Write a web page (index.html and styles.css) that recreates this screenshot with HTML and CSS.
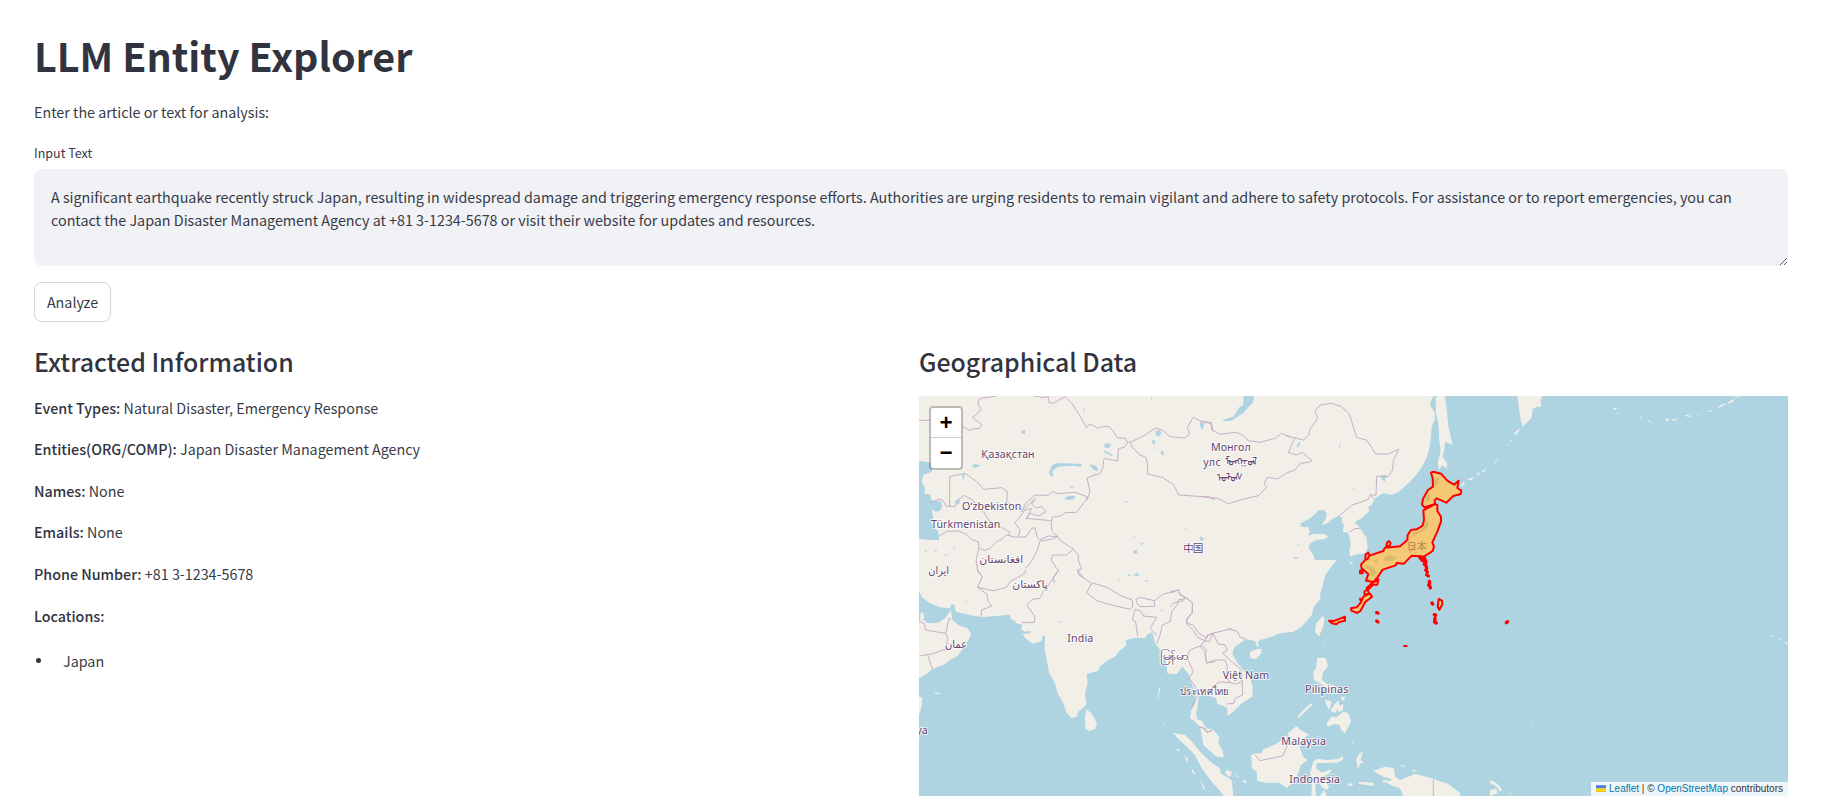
FILE: index.html
```html
<!DOCTYPE html>
<html lang="en">
<head>
<meta charset="utf-8">
<title>LLM Entity Explorer</title>
<link rel="stylesheet" href="styles.css">
</head>
<body>
<main class="page">
  <h1 class="title">LLM Entity Explorer</h1>
  <p class="intro">Enter the article or text for analysis:</p>
  <label class="field-label" for="input">Input Text</label>
  <textarea class="field" id="input" spellcheck="false">A significant earthquake recently struck Japan, resulting in widespread damage and triggering emergency response efforts. Authorities are urging residents to remain vigilant and adhere to safety protocols. For assistance or to report emergencies, you can contact the Japan Disaster Management Agency at +81 3-1234-5678 or visit their website for updates and resources.</textarea>
  <button class="analyze" type="button">Analyze</button>
  <div class="columns">
    <section>
      <h2 class="heading">Extracted Information</h2>
      <div class="facts">
        <p><strong>Event Types:</strong> Natural Disaster, Emergency Response</p>
        <p><strong>Entities(ORG/COMP):</strong> Japan Disaster Management Agency</p>
        <p><strong>Names:</strong> None</p>
        <p><strong>Emails:</strong> None</p>
        <p><strong>Phone Number:</strong> +81 3-1234-5678</p>
        <p><strong>Locations:</strong></p>
      </div>
      <ul class="places"><li>Japan</li></ul>
    </section>
    <section>
      <h2 class="heading">Geographical Data</h2>
      <div class="map">
        <svg class="tiles" viewBox="0 0 2607 1200">
          <!-- Central Asia -->
          <g transform="translate(-12,-168)">
            <path class="land" d="M12 168H950V740H12Z"/>
            <path class="water" d="M12 364L25 364 52 370 50 395 25 405 20 425 30 445 28 460 47 465 48 480 60 482 78 485 82 500 75 512 62 515 50 508 55 535 48 545 52 555 70 575 72 600 40 600 12 596Z"/>
            <path class="water" d="M402 395L412 375 430 369 500 372 498 380 470 377 430 380 412 392 415 412 405 406ZM523 372L545 378 550 393 535 390ZM448 474L462 467 482 468 478 477 455 480ZM570 310L590 312 580 325 568 322ZM565 330L594 344 590 348 566 336ZM722 272L735 270 740 280 730 290 722 284ZM710 298L720 303 718 314 712 308ZM860 243L868 245 866 270 860 272ZM322 270L331 270 329 283 320 281ZM175 372L198 376 180 384 172 380ZM142 402L150 405 143 427ZM124 480L133 477 135 488 125 495ZM850 590L864 592 866 602 852 600ZM627 483L640 485 634 489ZM655 590L660 588 660 594ZM735 335L746 332 746 346 740 345ZM672 612L690 605 680 614ZM655 632L665 628 668 640 656 642ZM465 437L480 440 468 444ZM505 202L511 213 504 210ZM620 705L635 702 632 712ZM650 700L672 696 665 706ZM535 398L540 400 536 406ZM28 632L38 630 32 636ZM58 632L68 628 62 635ZM85 645L100 643 92 648ZM115 622L120 618 118 626ZM810 564L816 568 810 569ZM718 322L723 325 718 328ZM540 174L545 172 542 178ZM708 168L712 178 708 180Z"/>
          </g>
          <!-- East Asia -->
          <g transform="translate(843,-18)">
            <path class="land" d="M-10 18H700L690 40 695 55 704 65 704 90 695 110 692 150 688 175 680 205 660 240 640 265 600 303 575 315 552 310 545 312 525 325 515 345 505 350 508 363 485 385 470 392 465 400 480 412 490 430 500 445 503 475 495 490 470 493 450 500 448 480 452 465 450 450 445 428 428 425 432 405 425 395 428 383 415 378 395 388 385 398 365 405 378 385 380 370 372 360 355 361 342 376 325 388 302 400 303 411 325 411 330 425 322 437 345 431 370 432 385 439 375 447 350 450 332 458 325 472 340 495 350 525 377 552 365 590 360 612 340 645 310 670 280 705 265 720H-10Z"/>
            <path class="land" d="M707 22L715 18H735L740 60 745 110 758 165 735 155 733 175 728 200 742 222 740 236 727 226 717 240 713 215 722 185 718 150 715 100 708 70ZM447 517L460 516 455 523ZM782 285L792 276 795 280 786 290ZM800 270L822 260 815 270ZM828 252L842 246 835 256ZM844 243L860 235 850 246ZM870 225L874 222 874 226ZM888 213L898 205 893 213Z"/>
            <path class="water" d="M130 18H163L158 38 130 68 95 92 66 94 75 88 100 80 118 52 130 45ZM290 165L300 155 302 160 292 175ZM415 172L422 160 420 174ZM543 256L558 256 555 275 545 268ZM0 98H13L8 122 0 108ZM310 515L320 520 315 525ZM280 500L300 503 285 507ZM248 600L262 602 255 612ZM192 570L208 568 200 580ZM270 600L285 598 278 604ZM302 568L320 562 318 574ZM0 440L12 445 8 453 0 450ZM260 134L272 137 262 141ZM292 462L298 460 297 467ZM325 530L333 535 326 538ZM458 295L462 292 461 300Z"/>
          </g>
          <!-- Middle East and South Asia -->
          <g transform="translate(-12,522)">
            <path class="land" d="M12 62L20 80 45 100 75 112 105 115 110 102 118 104 122 125 165 135 200 142 240 138 285 134 288 148 300 152 305 160 322 164 318 178 330 185 348 182 345 190 322 192 335 208 355 222 380 212 384 197 390 197 389 240 397 280 402 308 420 340 428 370 445 400 455 430 470 445 485 440 490 425 505 413 514 403 510 370 518 340 515 312 550 302 553 290 580 270 600 260 612 244 635 225 632 210 660 203 690 205 697 193 712 187 720 220 735 240 748 260 755 285 757 310 785 312 802 288 818 310 930 340V-30H12ZM12 155L22 150 30 152 38 160 70 158 90 145 108 120 112 150 130 165 158 175 168 192 160 212 148 222 142 238 128 258 105 270 85 285 52 297 38 310 12 324ZM18 125L26 130 27 148 14 152ZM514 418L530 430 546 460 540 478 520 483 511 475 510 440ZM60 367L76 369 72 373 60 371ZM12 380L22 383 20 410 12 435ZM732 352L736 353 728 400ZM782 535L795 540 790 545ZM808 555L820 568 815 577ZM832 598L840 612 838 615ZM92 663L97 664 95 667ZM746 458L752 468 748 467Z"/>
            <path class="water" d="M657 12L668 8 672 18 660 18ZM636 12L650 15 640 18ZM688 30L703 32 695 36ZM430 158L440 152 438 158ZM148 93L158 95 150 97ZM608 30L620 32 612 34ZM760 105L775 98 765 107ZM735 120L745 118 738 123Z"/>
          </g>
          <!-- South-East Asia -->
          <g transform="translate(753,552)">
            <path class="land" d="M-10 -60H500L465 -15 455 30 450 40 452 55 432 80 425 105 395 140 370 155 330 160 300 172 270 180 262 188 268 198 262 202 255 183 228 178 210 190 193 202 187 222 200 245 218 268 238 288 248 320 247 350 235 358 215 370 190 395 172 408 172 385 160 378 142 372 138 355 110 345 92 342 86 352 82 385 78 400 82 418 95 422 110 445 130 450 148 470 145 490 157 510 162 532 140 530 120 513 100 495 95 465 90 440 75 425 60 415 64 390 76 370 75 340 65 310 55 280 42 256 20 280 0 282Z"/>
            <path class="land" d="M240 215L262 206 276 208 272 222 258 237 240 234ZM457 108L463 115 460 138 447 170 435 155 438 132ZM442 233L467 233 474 258 458 280 456 300 470 312 490 315 505 330 470 325 450 310 432 300 430 275 438 265ZM10 459L45 465 70 490 90 515 125 548 150 565 152 580 185 600 190 648H160L150 632 125 605 95 565 75 525 45 495 28 480ZM382 410L400 390 424 369 427 374 405 396 386 414ZM243 525L258 520 275 520 280 508 318 492 335 480 352 462 380 437 388 448 418 464 395 478 400 485 388 500 400 530 412 540 392 556 385 580 372 605 350 624 328 608 285 608 262 602 260 575 246 565ZM430 545L440 536 470 540 505 537 520 527 518 540 500 548 440 549 438 565 455 578 485 568 480 580 455 592 478 620 470 630 455 622 445 600 436 610 438 648H424L426 600 420 580ZM470 428L485 410 500 412 520 395 535 400 543 425 538 435 525 460 515 452 508 435 495 432 472 440ZM465 358L485 365 478 390 468 372ZM490 378L505 360 508 378 495 400 482 392ZM512 350L525 350 522 362 515 360ZM503 380L520 372 518 392 505 395ZM610 572L645 560 672 565 675 590 690 600 735 582 775 592 835 612 870 638V648H700L690 625 670 618 648 608 668 598 640 590 625 582ZM568 520L578 516 572 540 582 550 570 550 565 570 558 540ZM565 605L610 608 612 618 568 612ZM535 610L550 612 545 618 533 614ZM637 602L650 600 655 605 640 608ZM220 600L230 602 226 609 218 606ZM198 583L206 590 200 592ZM170 570L186 575 180 592 165 580ZM65 565L75 578 68 580ZM90 600L105 625 100 628ZM690 555L708 558 700 562ZM725 568L740 572 730 575ZM545 482L551 486 548 490ZM450 648L462 630 470 648Z"/>
            <path class="land faint" d="M865 295L872 290 870 296ZM850 325L856 320 855 327ZM678 428L681 424 681 430ZM738 391L742 390 741 394ZM885 590L898 590 890 593ZM455 215L463 217 458 219ZM460 188L465 196 461 200ZM228 485L233 488 229 492ZM418 500L425 503 419 506Z"/>
          </g>
          <!-- Pacific -->
          <g transform="translate(1713,-18)">
            <path class="land" d="M82 18H157L152 30 154 50 140 50 128 58 124 85 98 110 92 90ZM72 132L80 122 92 115 85 127 76 135ZM60 148L66 150 60 156ZM52 162L58 165 52 167ZM12 218L22 209 18 218ZM33 192L38 188 36 193ZM366 54L380 54 378 60ZM380 68L390 70 384 72ZM448 84L455 80 452 86ZM470 84L486 100 480 98ZM526 88L535 85 538 92 528 92ZM543 90L565 84 552 92ZM582 78L598 72 595 78 610 77 600 80ZM620 73L628 73 622 76ZM650 65L672 58 660 66ZM684 50L700 42 712 40 698 48 686 54ZM712 38L735 25 728 36 716 41ZM732 20L752 20 738 23ZM840 738L848 735 849 741ZM868 747L875 748 872 753ZM884 755L893 757 890 764ZM120 1006L127 1004 126 1008ZM203 1033L207 1033 205 1035ZM878 1090L884 1097 880 1096ZM0 1170L20 1180 36 1198 30 1206 22 1192 0 1178ZM0 1200L20 1195 22 1210 0 1218ZM60 1212L64 1210 62 1218Z"/>
          </g>
          <!-- Borders -->
          <g class="borders">
            <g transform="translate(-12,-168)">
              <path d="M12 241H46M142 260L165 271 180 266 195 265 200 254 172 232 183 225 199 207 190 195 190 180 202 174 245 168M360 170L372 168 380 173 400 170 402 188 415 190 450 170 470 190 492 223 515 263 523 252 550 264 565 260 583 260 595 275 608 294 630 294 638 308 628 322 610 326 608 363 567 355 563 385 556 400 516 414 525 455 517 477 505 490 485 517 450 518 440 527 412 532 408 550 412 575 428 590M638 306H648L690 285 722 264 745 272 765 290 808 294 824 283 817 263 835 232 860 245 887 250 893 275M646 308L652 322 675 345 693 352 698 375 697 402 742 412 775 433 791 465 850 469 882 471 900 479M104 498V410L150 400 185 425 208 448 260 443 277 455 275 485 300 500 320 515 332 490 360 465 400 466 412 455 430 461 480 457 517 470 513 480M45 490L70 478 82 480 94 499H122L122 485 148 466 172 480 190 500 205 515 225 545 255 560 283 575V587L300 592 310 590 315 570 300 548 312 535 328 512 350 505 335 535 407 542M320 515L340 495 362 475 350 492 362 503 380 500 393 515 370 528 345 520 333 538M70 590L95 574 130 573 155 583 172 600 190 605 192 625 210 631 225 625 245 605 258 600 272 585 283 587M192 625L183 660 188 690 202 712M310 592L333 590 350 565 360 563 367 592 374 599 400 588 428 590 440 605 475 627 490 645 490 660 500 687 488 690 507 717M428 590L410 598 375 603 367 630 352 660 337 680 330 685M475 627L455 645 412 645 408 660 430 692 415 710 418 730"/>
            </g>
            <g transform="translate(843,-18)">
              <path d="M0 93L35 98 38 120 60 133 105 127 125 133 145 152 180 157 225 145 245 130 265 140 284 143 310 150 328 133 330 118 353 85 345 62 360 45 395 40 425 50 448 72 470 143 500 150 527 192 565 192 597 177 580 212 578 240 565 260 530 258 528 315 510 315 505 328 478 338 456 345 415 380M285 143L265 188 290 195 307 187 336 212 325 217 300 220 285 240 262 248 232 267 202 262 192 280 200 292 175 317 120 330 85 342 55 325 0 319M448 427L465 416 483 414M80 720L90 715 98 720M510 315L520 325 523 328"/>
            </g>
            <g transform="translate(-12,522)">
              <path d="M185 0L202 20 188 52 215 72 220 95 230 108 200 120 198 142M188 52L235 62 275 52 285 35 330 10 332 0M432 0L400 45 385 65 375 85 352 88 335 105 360 140 358 157 320 158M488 0L492 15 530 40 515 68 545 92 590 105 645 118 653 110 652 90 620 78 575 52 538 40 530 42M663 88L675 82 718 92 719 109 675 110 665 98ZM718 92L745 72 780 65 790 58 795 75 812 82 832 98 831 130 815 145 816 160 835 165 850 188 875 205 880 195 900 188M812 85L790 90 788 102 770 125 765 155 742 165 735 195 725 222M660 118L652 150 662 155 668 198M660 118L680 125 685 138 725 142 705 175 725 195M12 155L28 160 32 180 60 185 92 190 102 145 108 148M92 190L98 205 92 238 50 252 12 258M38 255L52 297M873 210L855 228 825 240 815 260 835 305 822 325 838 345 850 372 830 415M860 225L875 240 870 255 875 278 900 275M855 470L865 475 875 487 890 482"/>
            </g>
            <g transform="translate(753,552)">
              <path d="M0 35L25 30 30 42 45 52 68 68 67 98 50 120 50 132 70 150 82 172 105 182 112 165 128 160 180 147 203 155 210 172 228 178M0 80L10 70 40 62 45 52M105 182L90 198 105 215 110 250 135 240 165 240 172 260 170 290 180 308 150 305 130 318 145 340M128 160L145 192 165 195 172 210 158 220 180 240 215 270 218 345 195 355 192 370 168 372M180 308L200 312 218 302M105 182L117 186 128 162M255 525L270 542 338 528 355 490 353 462M790 600V648M88 440L105 445 112 457 126 452"/>
            </g>
          </g>
          <!-- Country labels -->
          <g class="labels">
            <text x="187" y="186" textLength="160">Қазақстан</text>
            <text x="129" y="342" textLength="178">Oʻzbekiston</text>
            <text x="36" y="396" textLength="208">Türkmenistan</text>
            <text x="181" y="502" textLength="132" lengthAdjust="spacingAndGlyphs">افغانستان</text>
            <text x="28" y="534" textLength="62" lengthAdjust="spacingAndGlyphs">ایران</text>
            <text x="280" y="577" textLength="106" lengthAdjust="spacingAndGlyphs">پاکستان</text>
            <text x="78" y="756" textLength="66" lengthAdjust="spacingAndGlyphs">عمان</text>
            <text x="445" y="739" textLength="78">India</text>
            <text x="793" y="467" textLength="60">中国</text>
            <text x="876" y="164" textLength="119">Монгол</text>
            <text x="853" y="210" textLength="52">улс</text>
            <text x="917" y="208" textLength="98" lengthAdjust="spacingAndGlyphs">ᠮᠣᠩᠭᠣᠯ</text>
            <text x="895" y="255" textLength="78" lengthAdjust="spacingAndGlyphs">ᠤᠯᠤᠰ</text>
            <text x="723" y="792" textLength="84" lengthAdjust="spacingAndGlyphs">မြန်မာ</text>
            <text x="783" y="896" textLength="146" lengthAdjust="spacingAndGlyphs">ประเทศไทย</text>
            <text x="911" y="849" textLength="140">Việt Nam</text>
            <text x="1158" y="890" textLength="130">Pilipinas</text>
            <text x="1087" y="1047" textLength="134">Malaysia</text>
            <text x="1111" y="1162" textLength="152">Indonesia</text>
            <text x="-8" y="1013">ya</text>
          </g>
          <!-- Japan highlight -->
          <g class="japan" transform="translate(1173,132)">
            <path d="M363 98L370 95 393 101 412 122 432 134 446 122 442 144 454 152 452 162 430 168 409 188 380 175 374 181 375 192 350 200 344 203 336 194 339 176 354 150 369 140 368 115Z"/>
            <path d="M340 211L375 192 382 195 382 213 393 230 393 245 382 275 367 307 372 320 368 333 342 350 330 349 305 347 282 371 260 369 257 376 218 389 202 413 190 426 168 422 175 402 155 385 153 374 178 347 220 333 225 323 270 319 292 300 293 285 303 270 320 268 338 257 342 240Z"/>
            <path d="M229 318L231 308 237 303 242 310 238 318ZM166 358L167 343 175 338 179 346 172 358ZM150 392L158 390 158 400 150 400ZM184 431L205 418 202 434 190 434ZM170 444L184 431 188 436 175 448ZM163 455L172 448 178 462 164 463ZM123 505L140 502 152 488 160 470 180 461 186 470 165 487 152 512 142 519 124 512ZM150 476L156 480 152 482ZM57 542L72 543 90 536 105 530V542L88 546 78 553 66 550ZM386 477L396 482 397 493 388 509 383 500Z"/>
            <path class="terrain" d="M372 118L388 110 384 132 374 138ZM346 172L356 160 362 176 350 188ZM346 250L356 240 354 262 340 272 318 284 308 292 306 280 330 272ZM222 352L240 346 262 354 248 362 225 364ZM190 362L206 356 200 370ZM168 374L190 382 200 400 186 412 178 390 166 384ZM300 325L318 312 314 330 296 340Z"/>
            <path class="islet" d="M328 350L336 360 342 364M342 352L348 366 343 373M347 374L350 385M347 390L352 396M350 404L355 408M358 424L359 430 356 435M360 440L361 444M366 489L368 492M373 524L377 525M375 534L374 546 379 549M200 518L204 519M200 543L204 546M589 548L593 545"/>
            <path d="M282 618H290"/>
            <text x="290" y="329" textLength="60">日本</text>
          </g>
        </svg>
        <div class="zoom"><span>+</span><span>−</span></div>
        <div class="credit"><svg class="flag" viewBox="0 0 12 8"><path fill="#4C7BE1" d="M0 0h12v4H0z"/><path fill="#FFD500" d="M0 4h12v3H0z"/><path fill="#E0BC00" d="M0 7h12v1H0z"/></svg> <a>Leaflet</a> | © <a>OpenStreetMap</a> contributors</div>
      </div>
    </section>
  </div>
</main>
</body>
</html>
```

FILE: styles.css
```css
* { box-sizing: border-box; }
body {
  margin: 0;
  background: #fff;
  color: #383a46;
  font: 400 14.32px/25.6px "Noto Sans CJK JP", sans-serif;
}
p, h1, h2, ul { margin: 0; padding: 0; }
.page { display: flex; flex-direction: column; align-items: flex-start; padding: 28px 39px 0 34px; }
.title { color: #31333f; font-size: 39.45px; font-weight: 700; line-height: 53px; }
.intro { margin-top: 18px; }
.field-label { margin-top: 17px; font-size: 12.5px; line-height: 22px; }
.field {
  width: 100%;
  height: 97px;
  margin-top: 5px;
  padding: 16px 17px;
  border: 0;
  border-radius: 8px;
  background: #f0f2f6;
  color: #383a46;
  font: 400 14.32px/23px "Noto Sans CJK JP", sans-serif;
  resize: vertical;
  overflow: hidden;
}
.analyze {
  width: 77px;
  height: 40px;
  margin-top: 16px;
  padding: 0;
  border: 1px solid #d6d6d9;
  border-radius: 8px;
  background: #fff;
  color: #383a46;
  font: 400 14.32px/25.6px "Noto Sans CJK JP", sans-serif;
}
.columns { display: grid; grid-template-columns: 869px 869px; gap: 16px; margin-top: 20px; }
.heading { height: 54px; color: #31333f; font-size: 24.9px; font-weight: 500; line-height: 38px; }
.facts { display: flex; flex-direction: column; gap: 16px; margin-top: -1px; }
.facts strong { color: #31333f; font-weight: 500; }
.places { margin-top: 20px; list-style: none; }
.places li { display: flex; align-items: center; gap: 22px; padding-left: 2px; }
.places li::before { content: ""; width: 5px; height: 5px; border-radius: 50%; background: #31333f; }
.map { position: relative; height: 400px; overflow: hidden; background: #aed3e1; }
.tiles { display: block; width: 869px; height: 400px; }
.land { fill: #f2efe9; }
.faint { opacity: .6; }
.water { fill: #aed3e1; }
.borders { fill: none; stroke: #c5b0c6; stroke-width: 3; stroke-linejoin: round; }
.labels {
  fill: #64446f;
  stroke: #fff;
  stroke-opacity: .75;
  stroke-width: 6;
  paint-order: stroke;
  stroke-linejoin: round;
  font: 400 32px "Noto Sans", "Noto Sans CJK SC", "DejaVu Sans", sans-serif;
}
.japan path { fill: #f4c874; stroke: #f00; stroke-width: 6; stroke-linejoin: round; stroke-linecap: round; }
.japan .islet { fill: none; stroke-width: 10; }
.japan .terrain { fill: #d9ba6c; stroke: none; }
.japan text { fill: #b58650; font: 400 30px "Noto Sans CJK JP", sans-serif; }
.zoom {
  position: absolute;
  left: 10px;
  top: 10px;
  width: 34px;
  border: 2px solid rgba(0, 0, 0, .22);
  border-radius: 4px;
  background: #fff;
  background-clip: padding-box;
}
.zoom span {
  display: block;
  height: 30px;
  color: #000;
  font: 700 22px/34px "Liberation Mono", monospace;
  text-align: center;
}
.zoom span:first-child { border-bottom: 1px solid #ccc; }
.credit {
  position: absolute;
  right: 0;
  bottom: 0;
  height: 14px;
  padding: 0 5px;
  background: rgba(255, 255, 255, .8);
  color: #333;
  font: 10px/14px "Liberation Sans", Arial, sans-serif;
  white-space: nowrap;
}
.credit a { color: #0078a8; }
.flag { width: 10px; height: 7px; }
```
